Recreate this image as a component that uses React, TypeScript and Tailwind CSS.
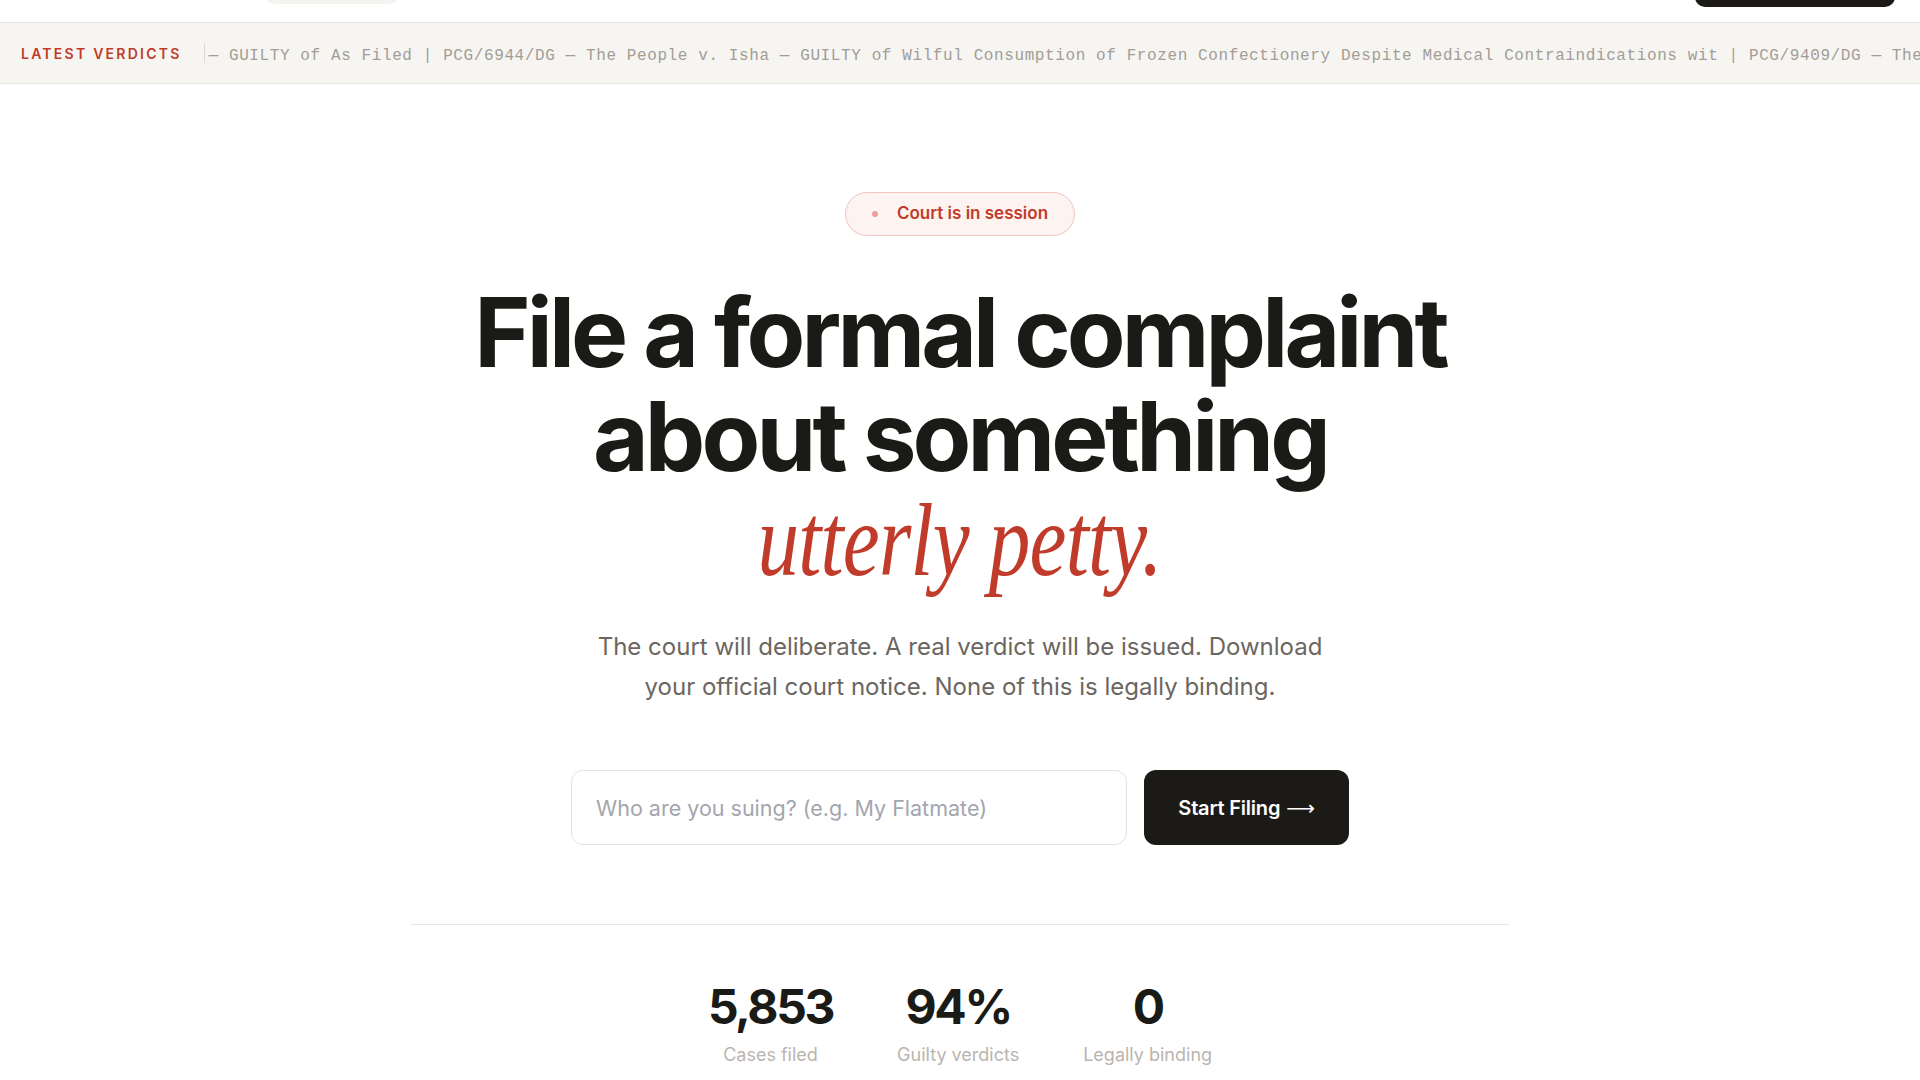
import React from 'react';

const verdicts =
  '— GUILTY of As Filed | PCG/6944/DG — The People v. Isha — GUILTY of Wilful Consumption of Frozen Confectionery Despite Medical Contraindications wit | PCG/9409/DG — The People v. Rohan — GUILTY of Leaving One Sip of Milk in the Carton | PCG/2231/DG — The People v. Meera — GUILTY as Filed';

const stats = [
  { value: '5,853', label: 'Cases filed' },
  { value: '94%', label: 'Guilty verdicts' },
  { value: '0', label: 'Legally binding' },
];

export default function App() {
  return (
    <div className="min-h-screen bg-white text-[#1a1a16] font-['Inter',sans-serif]">
      {/* Header (scrolled mostly out of view) */}
      <header className="h-[23px] overflow-hidden border-b border-[#e6e4df]">
        <div className="flex items-start justify-between pl-[265px] pr-[25px]">
          <div className="-mt-[32px] h-[36px] w-[134px] rounded-[10px] bg-[#f4f3f0]" />
          <div className="-mt-[38px] h-[45px] w-[200px] rounded-[10px] bg-[#1b1a17]" />
        </div>
      </header>

      {/* Ticker */}
      <div className="flex h-[61px] items-center overflow-hidden border-b border-[#e8e6e1] bg-[#f6f5f2] pl-[21px]">
        <span className="shrink-0 text-[14px] font-semibold uppercase tracking-[0.16em] text-[#c13b2a]">
          Latest Verdicts
        </span>
        <div className="ml-[22px] flex h-[20px] min-w-0 items-center overflow-hidden whitespace-nowrap border-l border-[#dcd9d3] pl-[4px]">
          <span className="translate-y-[3px] font-['Liberation_Mono',monospace] text-[16px] tracking-[0.6px] text-[#a29d96]">
            {verdicts}
          </span>
        </div>
      </div>

      {/* Hero */}
      <main className="flex flex-col items-center pt-[108px]">
        <div className="flex h-[44px] items-center gap-[19px] rounded-full border border-[#f0c6bf] bg-[#fdf3f1] pl-[26px] pr-[26px]">
          <span className="h-[6px] w-[6px] rounded-full bg-[#e9a197]" />
          <span className="text-[17px] font-semibold text-[#c13b2a]">Court is in session</span>
        </div>

        <h1 className="mt-[44px] text-center text-[96px] font-bold leading-[104px] tracking-[-0.04em]">
          <span className="block">File a formal complaint</span>
          <span className="block">about something</span>
          <span className="block font-['Liberation_Serif',serif] text-[104px] font-normal italic leading-[104px] tracking-[-0.01em] text-[#c13b2a]">
            <span className="inline-block scale-x-[0.8]">utterly petty.</span>
          </span>
        </h1>

        <p className="mt-[35px] max-w-[750px] text-center text-[24px] leading-[40px] text-[#6b6660]">
          The court will deliberate. A real verdict will be issued. Download your official court notice. None of this is legally binding.
        </p>

        <form className="mt-[63px] flex gap-[17px]" onSubmit={(e) => e.preventDefault()}>
          <input
            type="text"
            placeholder="Who are you suing? (e.g. My Flatmate)"
            className="h-[75px] w-[556px] rounded-[12px] border border-[#e3e1dc] bg-white px-[24px] text-[21.5px] text-[#1a1a16] outline-none placeholder:text-[#a3a6ad]"
          />
          <button
            type="submit"
            className="flex h-[75px] w-[205px] items-center justify-center gap-[6px] rounded-[12px] bg-[#1b1a17] text-[20px] font-semibold tracking-[-0.01em] text-white"
          >
            Start Filing
            <span className="font-['DejaVu_Sans',sans-serif] text-[20px] font-normal">⟶</span>
          </button>
        </form>

        <div className="mt-[79px] h-px w-[1098px] bg-[#e8e6e1]" />

        <div className="mt-[58px] flex gap-[64px]">
          {stats.map((s) => (
            <div key={s.label} className="flex flex-col items-center">
              <span className="text-[48px] font-bold leading-[48px] tracking-[-0.05em]">{s.value}</span>
              <span className="mt-[12px] text-[18px] leading-[24px] text-[#bab5af]">{s.label}</span>
            </div>
          ))}
        </div>
      </main>
    </div>
  );
}
